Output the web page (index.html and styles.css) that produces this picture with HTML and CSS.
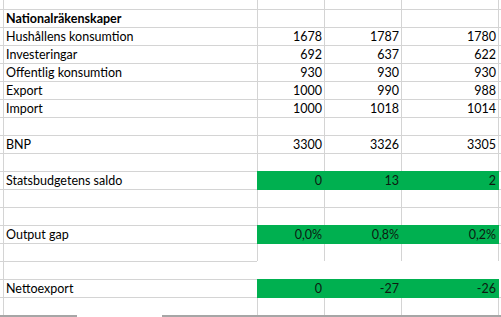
FILE: index.html
```html
<!DOCTYPE html>
<html lang="sv">
<head>
<meta charset="utf-8">
<title>Nationalräkenskaper</title>
<link rel="stylesheet" href="styles.css">
</head>
<body>
<div class="sheet">
  <div class="c"></div><div class="c"></div><div class="c"></div><div class="c"></div><div class="c"></div><div class="c e"></div>

  <div class="c"></div><div class="c lbl b">Nationalräkenskaper</div><div class="c"></div><div class="c"></div><div class="c"></div><div class="c e"></div>

  <div class="c"></div><div class="c lbl">Hushållens konsumtion</div><div class="c num">1678</div><div class="c num">1787</div><div class="c num">1780</div><div class="c e"></div>

  <div class="c"></div><div class="c lbl">Investeringar</div><div class="c num">692</div><div class="c num">637</div><div class="c num">622</div><div class="c e"></div>

  <div class="c"></div><div class="c lbl">Offentlig konsumtion</div><div class="c num">930</div><div class="c num">930</div><div class="c num">930</div><div class="c e"></div>

  <div class="c"></div><div class="c lbl">Export</div><div class="c num">1000</div><div class="c num">990</div><div class="c num">988</div><div class="c e"></div>

  <div class="c"></div><div class="c lbl">Import</div><div class="c num">1000</div><div class="c num">1018</div><div class="c num">1014</div><div class="c e"></div>

  <div class="c"></div><div class="c"></div><div class="c"></div><div class="c"></div><div class="c"></div><div class="c e"></div>

  <div class="c"></div><div class="c lbl">BNP</div><div class="c num">3300</div><div class="c num">3326</div><div class="c num">3305</div><div class="c e"></div>

  <div class="c"></div><div class="c"></div><div class="c"></div><div class="c"></div><div class="c"></div><div class="c e"></div>

  <div class="c"></div><div class="c lbl">Statsbudgetens saldo</div><div class="c num green">0</div><div class="c num green">13</div><div class="c num green">2</div><div class="c e"></div>

  <div class="c"></div><div class="c"></div><div class="c"></div><div class="c"></div><div class="c"></div><div class="c e"></div>

  <div class="c"></div><div class="c"></div><div class="c"></div><div class="c"></div><div class="c"></div><div class="c e"></div>

  <div class="c"></div><div class="c lbl">Output gap</div><div class="c num green">0,0%</div><div class="c num green">0,8%</div><div class="c num green">0,2%</div><div class="c e"></div>

  <div class="c"></div><div class="c"></div><div class="c"></div><div class="c"></div><div class="c"></div><div class="c e"></div>

  <div class="c"></div><div class="c"></div><div class="c white"></div><div class="c white"></div><div class="c white"></div><div class="c e white"></div>

  <div class="c"></div><div class="c lbl">Nettoexport</div><div class="c num green">0</div><div class="c num green">-27</div><div class="c num green">-26</div><div class="c e"></div>

  <div class="c last"></div><div class="c last"></div><div class="c last"></div><div class="c last"></div><div class="c last"></div><div class="c e last"></div>
</div>
<div class="bottom">
  <div class="seg seg1"></div>
  <div class="seg gap"></div>
  <div class="seg seg2"></div>
</div>
</body>
</html>
```

FILE: styles.css
```css
html, body {
  margin: 0;
  padding: 0;
  background: #ffffff;
}

body {
  width: 501px;
  height: 317px;
  overflow: hidden;
  font-family: Lato, "Liberation Sans", sans-serif;
  font-size: 12.5px;
  color: #000000;
}

.sheet {
  display: grid;
  grid-template-columns: 4px 254px 67px 77px 97px 2px;
  grid-template-rows: 10px repeat(16, 18px) 17px;
}

.c {
  box-sizing: border-box;
  border-right: 1px solid #d4d4d4;
  border-bottom: 1px solid #d4d4d4;
  line-height: 17px;
  white-space: nowrap;
  overflow: hidden;
}

.c.e {
  border-right: none;
}

.c.last {
  border-bottom: none;
}

.lbl {
  padding-left: 2px;
}

.b {
  font-weight: 700;
}

.num {
  text-align: right;
  padding-right: 2px;
}

.green {
  background: #00b050;
  border-color: #00b050;
  color: #0d1a10;
  box-shadow: 0 -1px 0 #00b050, -1px 0 0 #00b050, -1px -1px 0 #00b050;
}

.white {
  background: #ffffff;
  border-color: #ffffff;
  box-shadow: 0 -1px 0 #ffffff, -1px 0 0 #ffffff, -1px -1px 0 #ffffff;
}

.bottom {
  display: flex;
  height: 2px;
}

.seg {
  height: 2px;
}

.seg1 {
  width: 77px;
  background: #a6a6a6;
}

.gap {
  width: 85px;
  background: #ffffff;
}

.seg2 {
  flex: 1;
  background: #a6a6a6;
}
```
